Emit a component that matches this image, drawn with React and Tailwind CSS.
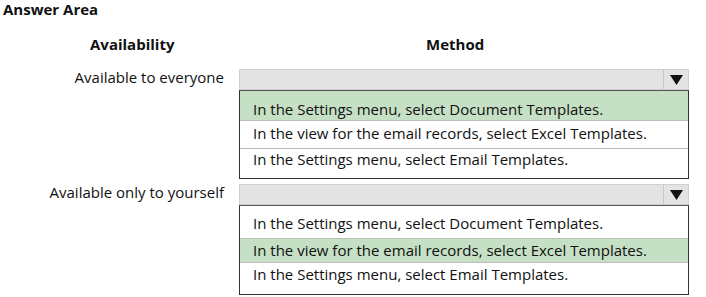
import { useState } from "react";

const OPTIONS = [
  "In the Settings menu, select Document Templates.",
  "In the view for the email records, select Excel Templates.",
  "In the Settings menu, select Email Templates.",
];

const Dropdown = () => (
  <div className="flex h-[21px] border border-[#d0d0d0] bg-[#e3e3e3]">
    <div className="flex-1" />
    <div className="flex w-[25px] items-center justify-center border-l border-[#c8c8c8]">
      <svg width="13" height="10" viewBox="0 0 13 10">
        <path d="M0 0 L13 0 L6.5 10 Z" fill="#111" />
      </svg>
    </div>
  </div>
);

const OptionList = ({ selected, rows }) => (
  <div className="border border-[#333] border-t-[#555]">
    {OPTIONS.map((text, i) => (
      <div
        key={text}
        className={`pl-[13px] leading-[20px] ${rows[i]} ${
          i < OPTIONS.length - 1 ? "border-b border-[#bdbdbd]" : ""
        } ${selected === i ? "bg-[#c5e0c4]" : "bg-white"}`}
      >
        {text}
      </div>
    ))}
  </div>
);

const App = () => {
  const [picks] = useState([0, 1]);

  return (
    <div className="h-[297px] w-[706px] overflow-hidden bg-white text-[#111] font-['Segoe_UI','Open_Sans',sans-serif]">
      {/* Title */}
      <div className="pl-[3px] text-[15px] font-bold leading-[18px]">Answer Area</div>

      {/* Column headings */}
      <div className="mt-[17px] flex text-[15px] font-bold leading-[18px]">
        <div className="w-[239px] pl-[90px]">Availability</div>
        <div className="w-[449px] pl-[187px]">Method</div>
      </div>

      {/* Row 1 */}
      <div className="mt-[16px] flex text-[15px] leading-[16px]">
        <div className="w-[239px] pr-[15px] text-right">Available to everyone</div>
        <div className="w-[450px]">
          <Dropdown />
          <OptionList selected={picks[0]} rows={["h-[30px] pt-[8px]", "h-[28px] pt-[2px]", "h-[29px]"]} />
        </div>
      </div>

      {/* Row 2 */}
      <div className="mt-[5px] flex text-[15px] leading-[16px]">
        <div className="w-[239px] pr-[15px] text-right">Available only to yourself</div>
        <div className="w-[450px]">
          <Dropdown />
          <OptionList selected={picks[1]} rows={["h-[33px] pt-[7px]", "h-[24px] pt-[1px]", "h-[31px] pt-[1px]"]} />
        </div>
      </div>
    </div>
  );
};

export default App;
